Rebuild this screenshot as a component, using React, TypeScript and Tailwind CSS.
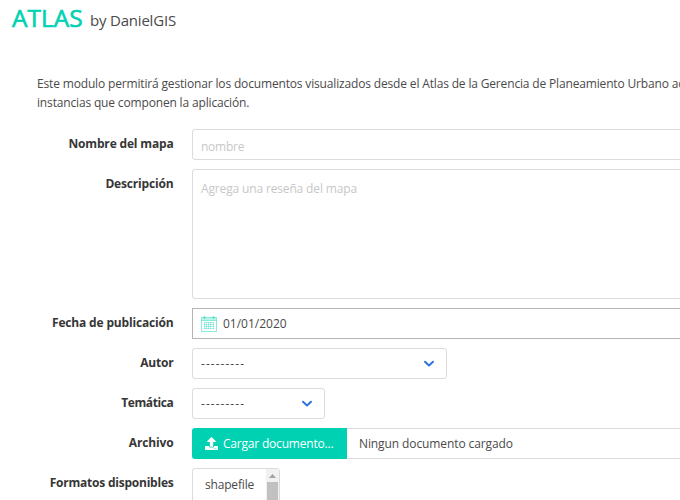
import type { ReactNode } from "react";

function Row({ label, tracking, children }: { label: string; tracking: string; children: ReactNode }) {
  return (
    <div className="flex items-start gap-[18.5px]">
      <label className={`w-[173.5px] shrink-0 pt-[5px] text-right font-bold leading-[19px] text-[#363636] ${tracking}`}>
        {label}
      </label>
      {children}
    </div>
  );
}

function SelectBox({ width }: { width: string }) {
  return (
    <div className={`flex h-[31px] items-center justify-between rounded-[3px] border border-[#dbdbdb] pl-2 pr-[11px] ${width}`}>
      <span className="pt-[2px] tracking-[1.03px]">---------</span>
      <svg width="12" height="8" viewBox="0 0 12 8" fill="none" stroke="#3273dc" strokeWidth="2" strokeLinecap="round" strokeLinejoin="round">
        <path d="M2 1.7 6 5.5 10 1.7" />
      </svg>
    </div>
  );
}

function CalendarIcon() {
  return (
    <svg width="16" height="16" viewBox="0 0 16 16" fill="none" stroke="#00d1b2">
      <path d="M.5 1.5h15v3H.5z" fill="#00d1b2" fillOpacity=".25" strokeOpacity=".4" />
      <path d="M.5 4.5v11h15v-11" strokeOpacity=".45" />
      <path d="M3.500 0v3M12.500 0v3" strokeOpacity=".5" strokeWidth="1.5" />
      <path d="M3 6.5h10M3 8.5h10M3 10.5h10M3 12.5h10M3.500 6v7M5.500 6v7M7.500 6v7M9.500 6v7M12.500 6v7" strokeOpacity=".3" />
    </svg>
  );
}

export default function App() {
  return (
    <main className="h-[500px] w-[680px] overflow-hidden bg-white font-['Open_Sans','Noto_Sans',sans-serif] text-[12px] leading-[18.5px] text-[#4a4a4a]">
      <header className="flex h-[75px] items-start pl-3">
        <h1 className="mt-[2px] w-[78px] text-[24.5px] leading-[32px] text-[#00d1b2] [-webkit-text-stroke:0.6px_#00d1b2]">ATLAS</h1>
        <span className="mt-[9px] text-[15px] leading-[22px] tracking-[-0.2px]">by DanielGIS</span>
      </header>

      <p className="ml-[37px] whitespace-nowrap tracking-[-0.16px]">
        Este modulo permitirá gestionar los documentos visualizados desde el Atlas de la Gerencia de Planeamiento Urbano ac
        <br />
        instancias que componen la aplicación.
      </p>

      <form className="mt-[17px] flex w-[760px] flex-col gap-[9px]">
        <Row label="Nombre del mapa" tracking="tracking-[-0.17px]">
          <input
            placeholder="nombre"
            className="h-[31px] flex-1 rounded-[3px] border border-[#dbdbdb] px-2 pb-0 pt-[3px] tracking-[-0.25px] placeholder:text-[#c7c7c7]"
          />
        </Row>
        <Row label="Descripción" tracking="tracking-[-0.17px]">
          <textarea
            placeholder="Agrega una reseña del mapa"
            className="h-[130px] flex-1 resize-none rounded-[3px] border border-[#dbdbdb] px-2 pt-[10px] tracking-[-0.15px] placeholder:text-[#c7c7c7]"
          />
        </Row>
        <Row label="Fecha de publicación" tracking="tracking-[-0.17px]">
          <div className="flex h-[31px] flex-1 items-center gap-[6px] border border-[#b5b5b5] pl-2">
            <CalendarIcon />
            <span className="pt-[2px]">01/01/2020</span>
          </div>
        </Row>
        <Row label="Autor" tracking="tracking-[-0.2px]">
          <SelectBox width="w-[255px]" />
        </Row>
        <Row label="Temática" tracking="tracking-[-0.38px]">
          <SelectBox width="w-[133px]" />
        </Row>
        <Row label="Archivo" tracking="tracking-[-0.15px]">
          <div className="flex h-[31px] flex-1">
            <div className="flex w-[155px] items-center rounded-l-[3px] bg-[#00d1b2] pl-[13px] text-white">
              <svg width="13" height="13" viewBox="0 0 512 512" fill="currentColor" className="mr-[5px]">
                <path d="M296 384h-80c-13.300 0-24-10.700-24-24V192h-87.700c-17.800 0-26.700-21.500-14.100-34.100L242.300 5.700c7.500-7.500 19.800-7.500 27.300 0l152.200 152.200c12.600 12.600 3.700 34.100-14.100 34.100H320v168c0 13.300-10.700 24-24 24zm216-8v112c0 13.300-10.700 24-24 24H24c-13.300 0-24-10.700-24-24V376c0-13.300 10.700-24 24-24h136v8c0 30.900 25.100 56 56 56h80c30.900 0 56-25.100 56-56v-8h136c13.300 0 24 10.700 24 24zm-124 88c0-11-9-20-20-20s-20 9-20 20 9 20 20 20 20-9 20-20zm64 0c0-11-9-20-20-20s-20 9-20 20 9 20 20 20 20-9 20-20z" />
              </svg>
              <span className="pt-[2px] tracking-[-0.2px]">Cargar documento...</span>
            </div>
            <div className="flex flex-1 items-center border-y border-[#dbdbdb] pl-3 pt-[2px] tracking-[-0.1px]">Ningun documento cargado</div>
          </div>
        </Row>
        <Row label="Formatos disponibles" tracking="tracking-[-0.23px]">
          <div className="flex h-[90px] w-[88px] justify-between rounded-[3px] border border-[#dbdbdb]">
            <span className="pl-3 pt-[7px] tracking-[-0.18px]">shapefile</span>
            <div className="flex w-[13px] flex-col items-center bg-[#f1f1f1]">
              <svg width="7" height="4" viewBox="0 0 7 4" className="mt-[5px]">
                <path d="M0 4 3.500 0 7 4z" fill="#a3a3a3" />
              </svg>
              <div className="mt-1 w-[11px] flex-1 bg-[#c1c1c1]" />
            </div>
          </div>
        </Row>
      </form>
    </main>
  );
}
